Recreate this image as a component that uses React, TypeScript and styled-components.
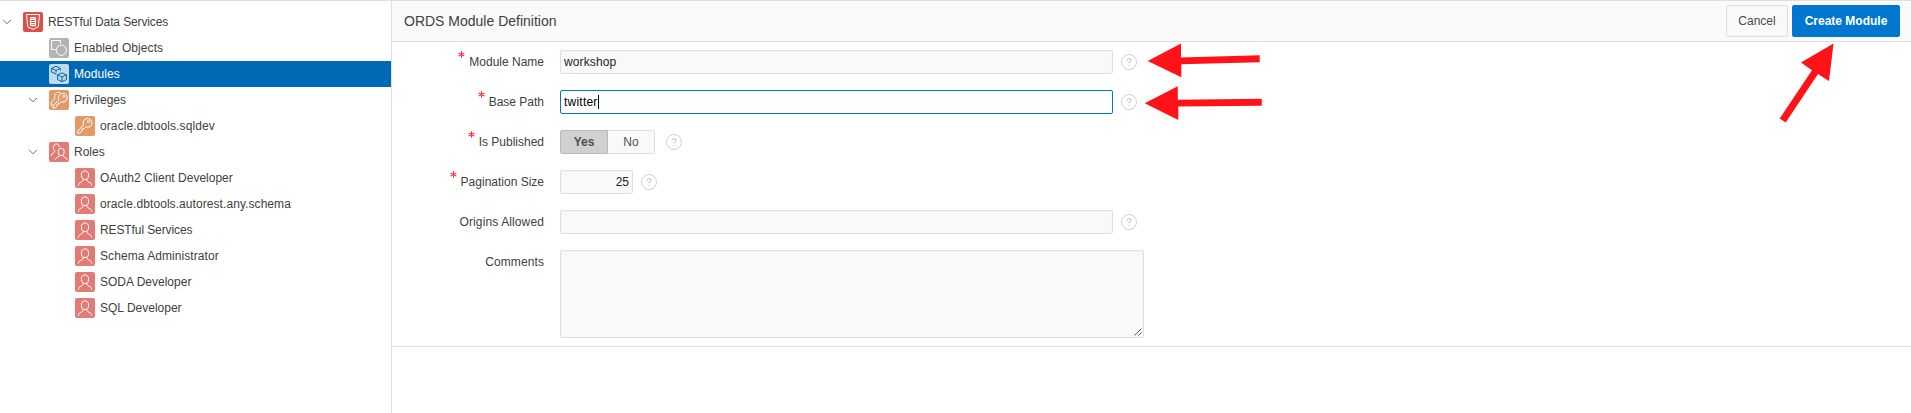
import React from "react";
import styled, { createGlobalStyle, css } from "styled-components";

const Global = createGlobalStyle`
  * { box-sizing: border-box; }
  html, body { margin: 0; background: #fff; overflow: hidden; }
  body { font: 12px/16px "Liberation Sans", Arial, sans-serif; color: #404040; }
`;

const Page = styled.div`
  position: relative;
  display: flex;
  width: 1911px;
  height: 413px;
  border-top: 1px solid #dfdfdf;
`;

const Sidebar = styled.nav`
  width: 392px;
  flex: none;
  padding-top: 8px;
  border-right: 1px solid #dfdfdf;
`;

const TreeRow = styled.div<{ $level: number; $selected?: boolean }>`
  display: flex;
  align-items: center;
  height: 26px;
  padding-left: ${(p) => p.$level * 26 + 2}px;
  ${(p) => p.$selected && css`background: #0069b6; color: #fff;`}
`;

const Toggle = styled.span`
  display: flex;
  width: 21px;
  flex: none;
`;

const IconTile = styled.svg<{ $bg: string }>`
  width: 20px;
  height: 20px;
  flex: none;
  margin-right: 5px;
  border-radius: 2px;
  background: ${(p) => p.$bg};
  fill: none;
  stroke: #fff;
  stroke-width: 1;
`;

const Txt = styled.span<{ $track?: number }>`
  white-space: nowrap;
  letter-spacing: ${(p) => p.$track ?? 0}px;
`;

const Main = styled.main`
  flex: 1;
  min-width: 0;
`;

const Header = styled.header`
  display: flex;
  align-items: center;
  height: 41px;
  padding: 0 11px 0 12px;
  gap: 4px;
  background: #fafafa;
  border-bottom: 1px solid #dfdfdf;
`;

const Title = styled.h1`
  flex: 1;
  margin: 0;
  font-size: 14px;
  font-weight: 400;
`;

const Button = styled.button<{ $primary?: boolean }>`
  height: 32px;
  width: ${(p) => (p.$primary ? 108 : 62)}px;
  padding: 0;
  font: 12px/16px "Liberation Sans", Arial, sans-serif;
  border: 1px solid #dfdfdf;
  border-radius: 2px;
  background: #f9f9f9;
  color: #4a4a4a;
  ${(p) => p.$primary && css`
    background: #0076ce;
    border-color: #0076ce;
    color: #fff;
    font-weight: 700;
  `}
`;

const Form = styled.form`
  display: flex;
  flex-direction: column;
  gap: 16px;
  height: 305px;
  padding-top: 8px;
  border-bottom: 1px solid #dfdfdf;
`;

const Field = styled.div`
  display: flex;
  align-items: flex-start;
`;

const Label = styled.label`
  display: flex;
  justify-content: flex-end;
  width: 152px;
  margin-right: 16px;
  padding-top: 4px;
`;

const Required = styled.svg`
  width: 7px;
  height: 7px;
  margin: -3px 4px 0 0;
  stroke: #fb2b40;
  stroke-width: 1.1;
`;

const Input = styled.input<{ $width: number; $alignEnd?: boolean }>`
  width: ${(p) => p.$width}px;
  height: 24px;
  padding: 0 3px;
  font: 12px/16px "Liberation Sans", Arial, sans-serif;
  letter-spacing: ${(p) => (p.$alignEnd ? 0 : 0.12)}px;
  text-align: ${(p) => (p.$alignEnd ? "right" : "left")};
  color: #222;
  background: #f9f9f9;
  border: 1px solid #dfdfdf;
  border-radius: 2px;
  outline: none;
  box-shadow: inset 0 1px 2px rgba(0, 0, 0, 0.035);
`;

const FocusBox = styled.div`
  display: flex;
  align-items: center;
  width: 553px;
  height: 24px;
  padding-left: 3px;
  color: #000;
  background: #fff;
  border: 1px solid #0076ce;
  border-radius: 2px;
`;

const Caret = styled.span`
  width: 1px;
  height: 14px;
  background: #000;
`;

const Switch = styled.div`
  display: flex;
  width: 95px;
  height: 24px;
`;

const Option = styled.span<{ $on?: boolean }>`
  display: flex;
  align-items: center;
  justify-content: center;
  width: ${(p) => (p.$on ? 48 : 47)}px;
  color: #505050;
  background: #f9f9f9;
  border: 1px solid #dfdfdf;
  border-left-width: 0;
  border-radius: 0 2px 2px 0;
  ${(p) => p.$on && css`
    background: #d0d0d0;
    border: 1px solid #b9b9b9;
    border-radius: 2px 0 0 2px;
    font-weight: 700;
  `}
`;

const HelpIcon = styled.svg<{ $gap: number }>`
  width: 16px;
  height: 16px;
  margin: 4px 0 0 ${(p) => p.$gap}px;
  fill: none;
  stroke: #d0d0d0;
`;

const Comments = styled.div`
  display: flex;
  align-items: flex-end;
  justify-content: flex-end;
  width: 584px;
  height: 88px;
  padding: 1px;
  background: #f9f9f9;
  border: 1px solid #dfdfdf;
  border-radius: 2px;
  box-shadow: inset 0 1px 2px rgba(0, 0, 0, 0.035);
`;

const Arrows = styled.svg`
  position: absolute;
  left: 0;
  top: -1px;
  pointer-events: none;
  fill: #ff1218;
`;

const Chevron = () => (
  <svg width="10" height="6" viewBox="0 0 10 6" fill="none" stroke="#707070">
    <path d="M1 .8 5 4.8 9 .8" />
  </svg>
);

const Help = ({ gap = 8 }: { gap?: number }) => (
  <HelpIcon viewBox="0 0 16 16" $gap={gap}>
    <circle cx="8" cy="8" r="7.5" />
    <path d="M6 6.7C6 5.4 6.8 4.7 8 4.7s2.1.7 2.1 1.8c0 1.3-2.1 1.4-2.1 3M8 11v1.3" strokeWidth="1.2" />
  </HelpIcon>
);

const Star = () => (
  <Required viewBox="0 0 7 7">
    <path d="M3.5.3v6.4M.7 1.9l5.6 3.2M.7 5.1l5.6-3.2" />
  </Required>
);

type Kind = "rest" | "objects" | "modules" | "keys" | "key" | "roles" | "role";

const tileColor: Record<Kind, string> = {
  rest: "#da4f49",
  objects: "#b3b3b3",
  modules: "#bfd9ed",
  keys: "#e29b66",
  key: "#e29b66",
  roles: "#e27a75",
  role: "#e27a75",
};

const keyPath =
  "M8.6 8.9A4.4 4.4 0 1 1 10.7 10.9L9.3 12.5H7.8V14H6.6V15.4L4.9 17.3H2.8V15Z";

const drawings: Record<Kind, React.ReactNode> = {
  rest: (
    <>
      <path d="M3.5 2.5h13l-1.2 12.2L10 17.4l-5.3-2.7Z" strokeLinejoin="round" />
      <path d="M7.5 6.3c0-1.1 5-1.1 5 0v6.6c0 1.1-5 1.1-5 0ZM7.5 7.3h5M7.5 9.5h5M7.5 11.7h5" strokeWidth="1.2" />
    </>
  ),
  objects: (
    <>
      <path d="M6.5 11.5h-4v-9h9v3.3" />
      <circle cx="12.3" cy="12.3" r="5.1" />
    </>
  ),
  modules: (
    <g stroke="#0069b6" strokeLinejoin="round">
      <path d="M7.5 10.2 2.6 8.1V4.4L7 2.3l4.4 2.1v2.2M2.6 4.4 7 6.4l4.4-2M7 6.4v2.2" />
      <path d="m13 8.9 4.4 2v4.6L13 17.7l-4.4-2.2v-4.6ZM8.6 10.9l4.4 2 4.4-2M13 12.9v4.8" />
    </g>
  ),
  keys: (
    <>
      <path d={keyPath} transform="translate(1.3 .8)" />
      <circle cx="14.8" cy="6.4" r="1" />
      <path d="M11 2.6C7.4 1.2 4.7 4.6 6 8L2.2 12.6V15h1.9" />
    </>
  ),
  key: (
    <>
      <path d={keyPath} />
      <circle cx="13.5" cy="5.6" r="1.1" />
    </>
  ),
  roles: (
    <>
      <path d="M10.4 4.9C10.2.9 4.3.9 4.3 5.2c0 1.8.6 3 1.6 3.9 0 2-3.5 1.4-3.7 4.8" />
      <ellipse cx="12.2" cy="9.9" rx="3.1" ry="3.7" />
      <path d="M10.7 13.1c0 2.4-4.2 1.6-4.4 4.7M13.7 13.1c0 2.4 4.2 1.6 4.4 4.7" />
    </>
  ),
  role: (
    <>
      <ellipse cx="10" cy="7.2" rx="3.6" ry="4.3" />
      <path d="M8.3 11c.1 4-4.8 2.4-5 6.7M11.7 11c-.1 4 4.8 2.4 5 6.7" />
    </>
  ),
};

interface Node {
  level: number;
  kind: Kind;
  text: string;
  open?: boolean;
  selected?: boolean;
  track?: number;
}

const nodes: Node[] = [
  { level: 0, kind: "rest", text: "RESTful Data Services", open: true, track: -0.12 },
  { level: 1, kind: "objects", text: "Enabled Objects", track: 0.07 },
  { level: 1, kind: "modules", text: "Modules", selected: true, track: 0.07 },
  { level: 1, kind: "keys", text: "Privileges", open: true },
  { level: 2, kind: "key", text: "oracle.dbtools.sqldev", track: 0.1 },
  { level: 1, kind: "roles", text: "Roles", open: true },
  { level: 2, kind: "role", text: "OAuth2 Client Developer" },
  { level: 2, kind: "role", text: "oracle.dbtools.autorest.any.schema", track: 0.07 },
  { level: 2, kind: "role", text: "RESTful Services", track: -0.1 },
  { level: 2, kind: "role", text: "Schema Administrator", track: 0.07 },
  { level: 2, kind: "role", text: "SODA Developer" },
  { level: 2, kind: "role", text: "SQL Developer" },
];

export default function App() {
  return (
    <>
      <Global />
      <Page>
        <Sidebar>
          {nodes.map((n) => (
            <TreeRow key={n.text} $level={n.level} $selected={n.selected}>
              <Toggle>{n.open && <Chevron />}</Toggle>
              <IconTile viewBox="0 0 20 20" $bg={tileColor[n.kind]}>{drawings[n.kind]}</IconTile>
              <Txt $track={n.track}>{n.text}</Txt>
            </TreeRow>
          ))}
        </Sidebar>
        <Main>
          <Header>
            <Title>ORDS Module Definition</Title>
            <Button>Cancel</Button>
            <Button $primary>Create Module</Button>
          </Header>
          <Form>
            <Field>
              <Label><Star /><Txt>Module Name</Txt></Label>
              <Input $width={553} defaultValue="workshop" />
              <Help />
            </Field>
            <Field>
              <Label><Star /><Txt>Base Path</Txt></Label>
              <FocusBox><Txt $track={0.22}>twitter</Txt><Caret /></FocusBox>
              <Help />
            </Field>
            <Field>
              <Label><Star /><Txt>Is Published</Txt></Label>
              <Switch><Option $on>Yes</Option><Option>No</Option></Switch>
              <Help gap={11} />
            </Field>
            <Field>
              <Label><Star /><Txt>Pagination Size</Txt></Label>
              <Input $width={73} $alignEnd defaultValue="25" />
              <Help />
            </Field>
            <Field>
              <Label><Txt $track={0.12}>Origins Allowed</Txt></Label>
              <Input $width={553} />
              <Help />
            </Field>
            <Field>
              <Label><Txt $track={0.1}>Comments</Txt></Label>
              <Comments>
                <svg width="8" height="8" viewBox="0 0 8 8" stroke="#444" strokeWidth=".9">
                  <path d="M.5 7.5l7-7M4.5 7.5l3-3" />
                </svg>
              </Comments>
            </Field>
          </Form>
        </Main>
        <Arrows width="1911" height="413" viewBox="0 0 1911 413">
          <path d="M1147.7 61 1181 43.5V57.4L1259.7 55.3V62.2L1181.3 64.2V77.3Z" />
          <path d="M1144.7 103.2 1177.8 86.3V99.7L1261.8 98.8V105.8L1178.3 106.6V120Z" />
          <path d="M1833.5 43.5 1829 81 1818 74 1785.7 122.4 1779.7 118.5 1812 70.2 1801 62.5Z" />
        </Arrows>
      </Page>
    </>
  );
}
